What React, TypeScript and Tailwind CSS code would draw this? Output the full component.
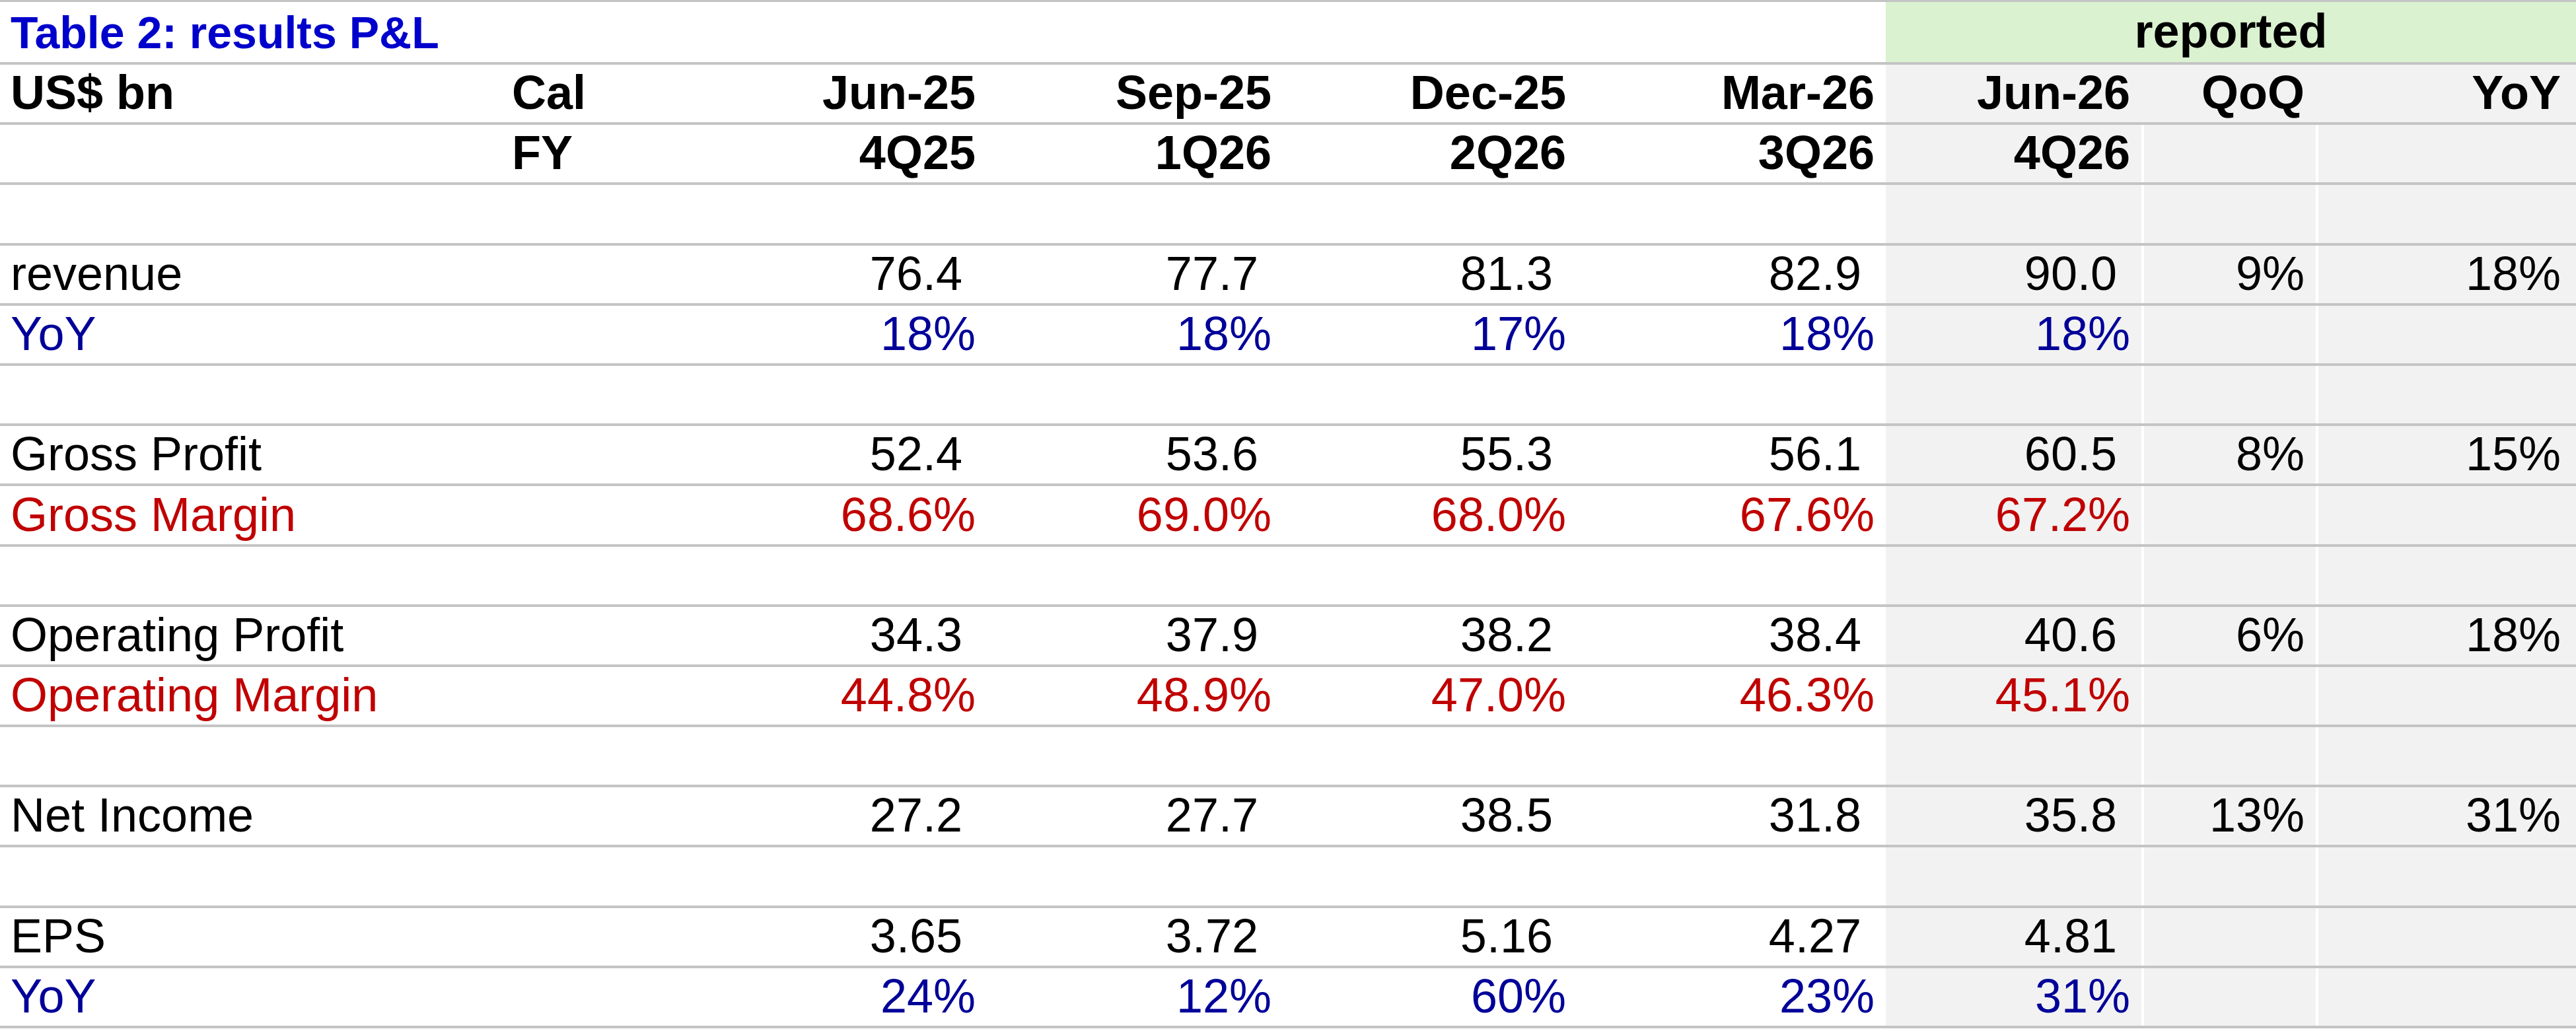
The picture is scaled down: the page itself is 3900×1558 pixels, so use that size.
import React from "react";

type Tone = "black" | "blue" | "red";

type Line = {
  label: string;
  tone?: Tone;
  bold?: boolean;
  cal?: string;
  values?: string[];
  qoq?: string;
  yoy?: string;
  grayNoSep?: boolean;
};

const cols =
  "grid grid-cols-[760px_286px_448px_448px_446px_467px_387px_264px_394px]";

const toneClass: Record<Tone, string> = {
  black: "text-black",
  blue: "text-[#000099]",
  red: "text-[#c00000]",
};

const lines: Line[] = [
  {
    label: "US$ bn",
    bold: true,
    cal: "Cal",
    values: ["Jun-25", "Sep-25", "Dec-25", "Mar-26", "Jun-26"],
    qoq: "QoQ",
    yoy: "YoY",
    grayNoSep: true,
  },
  { label: "", bold: true, cal: "FY", values: ["4Q25", "1Q26", "2Q26", "3Q26", "4Q26"] },
  { label: "" },
  { label: "revenue", values: ["76.4", "77.7", "81.3", "82.9", "90.0"], qoq: "9%", yoy: "18%" },
  { label: "YoY", tone: "blue", values: ["18%", "18%", "17%", "18%", "18%"] },
  { label: "" },
  { label: "Gross Profit", values: ["52.4", "53.6", "55.3", "56.1", "60.5"], qoq: "8%", yoy: "15%" },
  { label: "Gross Margin", tone: "red", values: ["68.6%", "69.0%", "68.0%", "67.6%", "67.2%"] },
  { label: "" },
  { label: "Operating Profit", values: ["34.3", "37.9", "38.2", "38.4", "40.6"], qoq: "6%", yoy: "18%" },
  { label: "Operating Margin", tone: "red", values: ["44.8%", "48.9%", "47.0%", "46.3%", "45.1%"] },
  { label: "" },
  { label: "Net Income", values: ["27.2", "27.7", "38.5", "31.8", "35.8"], qoq: "13%", yoy: "31%" },
  { label: "" },
  { label: "EPS", values: ["3.65", "3.72", "5.16", "4.27", "4.81"] },
  { label: "YoY", tone: "blue", values: ["24%", "12%", "60%", "23%", "31%"] },
];

// plain numbers sit one ")" width further left than percents and headers
function padFor(text: string, bold?: boolean) {
  if (bold || text.endsWith("%")) return "pr-[17px]";
  return "pr-[37px]";
}

function Row({ line }: { line: Line }) {
  const tone = toneClass[line.tone ?? "black"];
  const weight = line.bold ? "font-bold" : "font-normal";
  const vals = line.values ?? ["", "", "", "", ""];
  const cell = "flex items-end pb-[9px] leading-none whitespace-nowrap";
  const sep = line.grayNoSep ? "" : "border-l-4 border-white";

  return (
    <div className={`${cols} h-[91.19px] border-b-4 border-[#c4c4c4] ${weight} ${tone}`}>
      <div className={`${cell} pl-[16px]`}>{line.label}</div>
      <div className={`${cell} pl-[15px]`}>{line.cal}</div>
      {vals.map((v, i) => (
        <div
          key={i}
          className={`${cell} justify-end ${padFor(v, line.bold)} ${i === 4 ? "bg-[#f2f2f2]" : ""}`}
        >
          {v}
        </div>
      ))}
      <div className={`${cell} justify-end pr-[17px] bg-[#f2f2f2] ${sep}`}>{line.qoq}</div>
      <div className={`${cell} justify-end pr-[23px] bg-[#f2f2f2] ${sep}`}>{line.yoy}</div>
    </div>
  );
}

export default function App() {
  return (
    <div className="w-[3900px] h-[1558px] bg-white text-[72px] font-['Liberation_Sans',Arial,sans-serif] text-black">
      <div className="border-t-[3px] border-[#c4c4c4]">
        <div className={`${cols} h-[95px] border-b-4 border-[#c4c4c4] font-bold`}>
          <div className="col-span-6 flex items-end pb-[11px] pl-[16px] leading-none text-[68px] text-[#0000cc]">
            Table 2: results P&amp;L
          </div>
          <div className="col-span-3 flex items-end justify-center pb-[11px] leading-none bg-[#daf2d0]">
            reported
          </div>
        </div>
        {lines.map((line, i) => (
          <Row key={i} line={line} />
        ))}
      </div>
    </div>
  );
}
